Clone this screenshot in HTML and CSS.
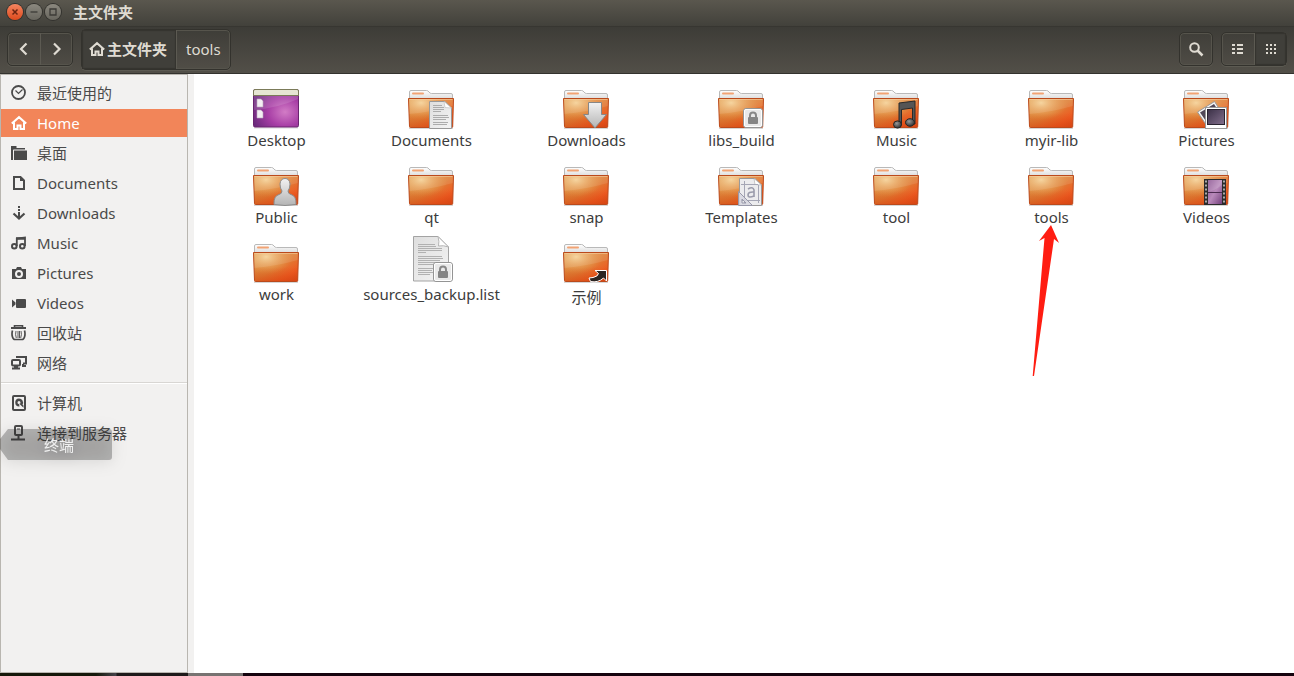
FILE: index.html
```html
<!DOCTYPE html>
<html lang="zh-CN">
<head>
<meta charset="utf-8">
<title>主文件夹</title>
<link rel="stylesheet" href="styles.css">
</head>
<body>
<svg class="defs" aria-hidden="true">
  <defs>
    <linearGradient id="gFolder" x1="0" y1="0" x2="1" y2="1">
      <stop offset="0" stop-color="#de9a4c"/><stop offset=".5" stop-color="#df7e36"/><stop offset=".78" stop-color="#ee5a22"/><stop offset="1" stop-color="#dc481a"/>
    </linearGradient>
    <radialGradient id="gGlow" cx=".28" cy=".15" r=".6">
      <stop offset="0" stop-color="#f6d49a" stop-opacity=".95"/><stop offset="1" stop-color="#e8a050" stop-opacity="0"/>
    </radialGradient>
    <linearGradient id="gShade" x1="0" y1="0" x2="0" y2="1">
      <stop offset=".5" stop-color="#d0480c" stop-opacity="0"/><stop offset="1" stop-color="#d0400c" stop-opacity=".5"/>
    </linearGradient>
    <linearGradient id="gTab" x1="0" y1="0" x2="0" y2="1">
      <stop offset="0" stop-color="#fff"/><stop offset="1" stop-color="#dcdcdc"/>
    </linearGradient>
    <linearGradient id="gPaper" x1="0" y1="0" x2="1" y2="1">
      <stop offset="0" stop-color="#dedede"/><stop offset="1" stop-color="#f4f4f4"/>
    </linearGradient>
    <linearGradient id="gMetal" x1="0" y1="0" x2="0" y2="1">
      <stop offset="0" stop-color="#f2f2f2"/><stop offset="1" stop-color="#b4b4b4"/>
    </linearGradient>
    <radialGradient id="gPurple" cx=".7" cy=".6" r=".75">
      <stop offset="0" stop-color="#d27cc6"/><stop offset=".5" stop-color="#a83fa6"/><stop offset="1" stop-color="#6b2a7c"/>
    </radialGradient>
    <linearGradient id="gPhoto" x1="0" y1="0" x2="1" y2="1">
      <stop offset="0" stop-color="#3a3046"/><stop offset="1" stop-color="#84708e"/>
    </linearGradient>
    <linearGradient id="gFilm" x1="0" y1="0" x2="1" y2="1">
      <stop offset="0" stop-color="#8a5290"/><stop offset=".5" stop-color="#b98abb"/><stop offset="1" stop-color="#74407c"/>
    </linearGradient>
    <radialGradient id="gNote" cx=".4" cy=".35" r=".6">
      <stop offset="0" stop-color="#999"/><stop offset="1" stop-color="#3a3a3a"/>
    </radialGradient>
  </defs>
  <symbol id="folder" viewBox="0 0 48 48">
    <path d="M2 47.600H46" stroke="#000" stroke-opacity=".16" stroke-width="1.600"/>
    <path d="M2.500 18V11q0-1.500 1.500-1.500H19.500q1.500 0 2.500 1.500t2.500 1.500H44q1.500 0 1.500 1.500v4z" fill="url(#gTab)" stroke="#b9b9b9"/>
    <rect x="5" y="11.500" width="12" height="2" rx="1" fill="#f2a374"/>
    <path d="M1.500 17.500h45L45.700 45.500q0 1-1 1H3.500q-1 0-1-1z" fill="url(#gFolder)"/>
    <path d="M1.500 17.500h45L45.700 45.500q0 1-1 1H3.500q-1 0-1-1z" fill="url(#gGlow)"/>
    <path d="M1.500 17.500h45L45.700 45.500q0 1-1 1H3.500q-1 0-1-1z" fill="url(#gShade)" stroke="#bb4a1c"/>
    <path d="M2 18h44l-.2 7Q25 31 2.400 33z" fill="#fff" fill-opacity=".1"/>
    <path d="M2.500 18.500h43" stroke="#f5cfa0" stroke-opacity=".6"/>
  </symbol>
  <symbol id="lock" viewBox="0 0 48 48">
    <rect x="26.500" y="27.500" width="19" height="19" rx="2.500" fill="#e9e9e9" stroke="#949494"/>
    <rect x="27.500" y="28.500" width="17" height="17" rx="1.500" fill="none" stroke="#fff"/>
    <path d="M33 37v-2.500a3 3 0 0 1 6 0V37" fill="none" stroke="#888" stroke-width="2"/>
    <rect x="31" y="36" width="10" height="7" rx="1" fill="#858585"/>
  </symbol>
  <symbol id="i-home" viewBox="0 0 16 16">
    <path d="M.8 8.600 8 2.200l7.200 6.400M3 7.500V14h3.500v-3.500h3V14H13V7.500" fill="none" stroke="currentColor" stroke-width="2"/>
  </symbol>
</svg>

<div class="window">
  <header class="chrome">
    <div class="titlebar">
      <button class="wbtn wbtn-close" aria-label="关闭"><svg viewBox="0 0 16 16"><path d="M5.500 5.500l5 5m0-5l-5 5" stroke="#6b2411" stroke-width="1.500"/></svg></button>
      <button class="wbtn" aria-label="最小化"><svg viewBox="0 0 16 16"><path d="M4.500 8h7" stroke="#3c3b37" stroke-width="1.300"/></svg></button>
      <button class="wbtn" aria-label="最大化"><svg viewBox="0 0 16 16"><path d="M5 5h6v6H5z" fill="none" stroke="#3c3b37" stroke-width="1.300"/></svg></button>
      <h1 class="title">主文件夹</h1>
    </div>
    <div class="toolbar">
      <div class="group nav">
        <button class="tbtn" aria-label="后退"><svg class="ico" viewBox="0 0 16 16"><path d="M10.500 2.500 5 8l5.500 5.500" fill="none" stroke="currentColor" stroke-width="2.200"/></svg></button>
        <button class="tbtn" aria-label="前进"><svg class="ico" viewBox="0 0 16 16"><path d="m5 2.500 5.500 5.500L5 13.500" fill="none" stroke="currentColor" stroke-width="2.200"/></svg></button>
      </div>
      <nav class="group path">
        <button class="crumb active"><svg class="ico"><use href="#i-home"/></svg>主文件夹</button>
        <button class="crumb">tools</button>
      </nav>
      <div class="group find">
        <button class="tbtn" aria-label="搜索"><svg class="ico" viewBox="0 0 16 16"><circle cx="6.500" cy="6.500" r="4.300" fill="none" stroke="currentColor" stroke-width="2"/><path d="m9.500 9.500 5 5" stroke="currentColor" stroke-width="2.500"/></svg></button>
      </div>
      <div class="group">
        <button class="tbtn" aria-label="列表视图"><svg class="ico" viewBox="0 0 16 16" fill="currentColor"><path d="M2 3h3v2H2zM7 3h6v2H7zM2 7h3v2H2zM7 7h6v2H7zM2 11h3v2H2zM7 11h6v2H7z"/></svg></button>
        <button class="tbtn active" aria-label="图标视图"><svg class="ico" viewBox="0 0 16 16" fill="currentColor"><path d="M3 3h2v2H3zM7 3h2v2H7zM11 3h2v2h-2zM3 7h2v2H3zM7 7h2v2H7zM11 7h2v2h-2zM3 11h2v2H3zM7 11h2v2H7zM11 11h2v2h-2z"/></svg></button>
      </div>
    </div>
  </header>

  <div class="body">
    <aside class="sidebar">
      <ul class="places">
        <li><a class="place" href="#recent"><svg class="ico" viewBox="0 0 16 16" fill="none" stroke="currentColor"><circle cx="7.500" cy="7.500" r="6.500" stroke-width="1.800"/><path d="M4.500 5.500 7.500 8.500l4-4" stroke-width="1.200"/></svg>最近使用的</a></li>
        <li><a class="place selected" href="#home"><svg class="ico"><use href="#i-home"/></svg>Home</a></li>
        <li><a class="place" href="#desktop"><svg class="ico" viewBox="0 0 16 16" fill="currentColor"><path d="M0 1h5.500v2H14v1.500H2.500L2 5v10H0zM3 5.500h13V15H3z"/></svg>桌面</a></li>
        <li><a class="place" href="#documents"><svg class="ico" viewBox="0 0 16 16"><path d="M3 2h6.500L13 5.500V14H3z" fill="none" stroke="currentColor" stroke-width="2"/><path d="M9 1.500V6h4.500z" fill="currentColor"/></svg>Documents</a></li>
        <li><a class="place" href="#downloads"><svg class="ico" viewBox="0 0 16 16"><path d="M7 1h2v2H7zM7 4h2v2H7zM7 7h2v6H7z" fill="currentColor"/><path d="M2.500 8.500 8 13.500l5.500-5" fill="none" stroke="currentColor" stroke-width="2.200"/></svg>Downloads</a></li>
        <li><a class="place" href="#music"><svg class="ico" viewBox="0 0 16 16" fill="none" stroke="currentColor" stroke-width="2"><circle cx="3.300" cy="11.300" r="2.300"/><circle cx="11.300" cy="11.300" r="2.300"/><path d="M5.800 11V3.500L14 2.500V11" stroke-width="1.800"/><path d="M5 3.500h9" stroke-width="2.500"/></svg>Music</a></li>
        <li><a class="place" href="#pictures"><svg class="ico" viewBox="0 0 16 16"><path fill="currentColor" fill-rule="evenodd" d="M1 4h4l1-2h4l1 2h4v10H1zM8 5a4 4 0 1 0 0 8 4 4 0 0 0 0-8zm0 2a2 2 0 1 1 0 4 2 2 0 0 1 0-4z"/></svg>Pictures</a></li>
        <li><a class="place" href="#videos"><svg class="ico" viewBox="0 0 16 16" fill="currentColor"><rect x="5" y="4" width="10" height="9" rx="1"/><path d="M1 4.500 4.500 7.500v2L1 12.500z"/></svg>Videos</a></li>
        <li><a class="place" href="#trash"><svg class="ico" viewBox="0 0 16 16" fill="none" stroke="currentColor"><path d="M0 3h15" stroke-width="2"/><path d="M3.500 2V.8h8V2" stroke-width="1.600"/><path d="M1.500 5.500Q.5 9 1.500 12q.7 2.500 2.500 2.500h7q1.800 0 2.500-2.500 1-3 0-6.500" stroke-width="1.700"/><path d="M5 6q-1 3.500.3 7M10 6q1 3.500-.3 7M7 6v7M8.500 6v7" stroke-width=".9"/></svg>回收站</a></li>
        <li><a class="place" href="#network"><svg class="ico" viewBox="0 0 16 16" fill="none" stroke="currentColor" stroke-width="2"><rect x="1" y="5" width="8" height="5.500" rx="1"/><path d="M6 3V2h9v6.500h-3"/><path d="M1 13.500h8M3 12h4" stroke-width="2.200"/><path d="M11 11h4M12 9v2"/></svg>网络</a></li>
      </ul>
      <ul class="places devices">
        <li><a class="place" href="#computer"><svg class="ico" viewBox="0 0 16 16"><rect x="2" y="1" width="12" height="14" rx="1" fill="none" stroke="currentColor" stroke-width="2"/><path fill="currentColor" fill-rule="evenodd" d="M8 3.500a4 4 0 1 0 .5 8L8 8.500l4.500 4.200 0-2.200-1-1A4 4 0 0 0 8 3.500zM8 6a1.500 1.500 0 1 1 0 3 1.500 1.500 0 0 1 0-3z"/></svg>计算机</a></li>
        <li><a class="place" href="#connect"><svg class="ico" viewBox="0 0 16 16"><rect x="4" y="1" width="7" height="9" rx="1" fill="none" stroke="currentColor" stroke-width="2"/><path fill="currentColor" d="M6 3.500h3v1H6zM6.500 10h2v4h-2zM0 13.500h14v2H0z"/></svg>连接到服务器</a></li>
      </ul>
    </aside>

    <main class="files">
      <ul class="grid">
        <li class="file"><svg class="thumb" viewBox="0 0 48 48"><path d="M2 47h44" stroke="#000" stroke-opacity=".15"/><rect x="1.500" y="8.500" width="45" height="37.500" rx="1.500" fill="url(#gPurple)" stroke="#6a246f"/><path d="M2 15h44v3Q26 27 2 29z" fill="#fff" fill-opacity=".13"/><path d="M1.500 14.500V10q0-1.500 1.500-1.500h42q1.500 0 1.500 1.500v4.500z" fill="#e6e6d3" stroke="#7b7b59"/><path d="M5 18h4l2 2v6H5zM5 29h4l2 2v6H5z" fill="#f3eef3" stroke="#b9a6bd" stroke-width=".6"/></svg><span class="label">Desktop</span></li>
        <li class="file"><svg class="thumb" viewBox="0 0 48 48"><use href="#folder"/><path d="M22.500 20.500H38L44.500 27v20.500h-22z" fill="url(#gPaper)" stroke="#999"/><path d="M37 20.500 38 26.500l6.500.5z" fill="#fff" stroke="#bbb" stroke-width=".6"/><path d="M26 24.500h9M26 26.500h11M26 28.500h11M26 30.500h8M26 34.500h15M26 36.500h16M26 38.500h13M26 41.500h15M26 43.500h14" stroke="#a5a5a5" stroke-width=".9"/></svg><span class="label">Documents</span></li>
        <li class="file"><svg class="thumb" viewBox="0 0 48 48"><use href="#folder"/><path d="M26.500 21.500h13v12h5L33 47 21.500 33.500h5z" fill="url(#gMetal)" stroke="#878787"/></svg><span class="label">Downloads</span></li>
        <li class="file"><svg class="thumb" viewBox="0 0 48 48"><use href="#folder"/><use href="#lock"/></svg><span class="label">libs_build</span></li>
        <li class="file"><svg class="thumb" viewBox="0 0 48 48"><use href="#folder"/><path d="M27 22 43 20v23h-2.500V27l-11 1.500V44H27z" fill="#555" stroke="#292929"/><ellipse cx="25.500" cy="43.500" rx="4" ry="3.600" fill="url(#gNote)" stroke="#262626"/><ellipse cx="38" cy="41.500" rx="4.500" ry="3.800" fill="url(#gNote)" stroke="#262626"/></svg><span class="label">Music</span></li>
        <li class="file"><svg class="thumb" viewBox="0 0 48 48"><use href="#folder"/></svg><span class="label">myir-lib</span></li>
        <li class="file"><svg class="thumb" viewBox="0 0 48 48"><use href="#folder"/><path d="m15.500 31 17-10.500 9 14L25 45z" fill="#f5f5f5" stroke="#999"/><path d="m18 31.500 14-8.500 7 11L26 43z" fill="#514858"/><rect x="23.500" y="26.500" width="21" height="21" fill="#fff" stroke="#999"/><rect x="25.500" y="28.500" width="17" height="15" fill="url(#gPhoto)" stroke="#292330"/></svg><span class="label">Pictures</span></li>
        <li class="file"><svg class="thumb" viewBox="0 0 48 48"><use href="#folder"/><path d="M22 46.500q-.5-8.500 5-10 3-.8 3-3.500-2-2.500-2-7 .5-5.500 5-5.500t5 5.500q0 4.500-2 7 0 2.700 3 3.500 5.500 1.500 5 10-11 2-22 0z" fill="url(#gMetal)" stroke="#8c8c8c"/></svg><span class="label">Public</span></li>
        <li class="file"><svg class="thumb" viewBox="0 0 48 48"><use href="#folder"/></svg><span class="label">qt</span></li>
        <li class="file"><svg class="thumb" viewBox="0 0 48 48"><use href="#folder"/></svg><span class="label">snap</span></li>
        <li class="file"><svg class="thumb" viewBox="0 0 48 48"><use href="#folder"/><path d="M22.500 20.500H38L44.500 27v20.500h-22z" fill="#ececee" stroke="#999"/><path d="M37 20.500 38 26.500l6.500.5z" fill="#fff" stroke="#aaa" stroke-width=".6"/><path d="M27.500 23v22M41.500 27v18M24 26.500h17M24 42.500h19" stroke="#a5a6b5"/><path d="M31 31q5-3 6 1v7M37 34q-6-.5-6 3t6 1" fill="none" stroke="#9a9bab" stroke-width="1.600"/><path d="M21.500 33.500v14h14zM25 41v4h4z" fill="#d7d7df" fill-opacity=".85" fill-rule="evenodd" stroke="#9899aa"/></svg><span class="label">Templates</span></li>
        <li class="file"><svg class="thumb" viewBox="0 0 48 48"><use href="#folder"/></svg><span class="label">tool</span></li>
        <li class="file"><svg class="thumb" viewBox="0 0 48 48"><use href="#folder"/></svg><span class="label">tools</span>
          <svg class="pointer" viewBox="0 0 28 152" aria-hidden="true"><path d="M19 0 27 18 22 14 2 151H.7L12.500 13 7 16z" fill="#ff1d12"/></svg></li>
        <li class="file"><svg class="thumb" viewBox="0 0 48 48"><use href="#folder"/><rect x="22" y="21" width="22" height="26" fill="#2b2b2b"/><rect x="26" y="22" width="14" height="24" fill="url(#gFilm)"/><path d="M26 22h14v5q-8 6-14 7z" fill="#fff" fill-opacity=".15"/><path d="M26 34.500h14" stroke="#4c2b50"/><path d="M24 22.500v24M42 22.500v24" stroke="#aaa" stroke-width="2" stroke-dasharray="2 2"/></svg><span class="label">Videos</span></li>
        <li class="file"><svg class="thumb" viewBox="0 0 48 48"><use href="#folder"/></svg><span class="label">work</span></li>
        <li class="file"><svg class="thumb" viewBox="0 0 48 48"><path d="M6.500 1.500H31L41.500 12v34h-35z" fill="url(#gPaper)" stroke="#a3a3a3"/><path d="M31 1.500q1.500 5 .5 9.500 5-1 10 1z" fill="#fff" stroke="#b5b5b5"/><path d="M11 9.500h17M11 11.500h18M11 13.500h24M11 15.500h24M11 17.500h8M11 21.500h24M11 23.500h25M11 25.500h22M11 27.500h24M11 29.500h21M11 33.500h15M11 35.500h14M11 37.500h15M11 39.500h12" stroke="#aaa" stroke-width=".9"/><use href="#lock"/></svg><span class="label">sources_backup.list</span></li>
        <li class="file"><svg class="thumb" viewBox="0 0 48 48"><use href="#folder"/><path d="M33 35.500h11.500V46L41.500 43q-5.500 5-13 3.500l-1.500-3.500 4-.5q5-1 5.500-4z" fill="#2c2522" stroke="#fff"/></svg><span class="label label-tall">示例</span></li>
      </ul>
    </main>
  </div>
  <div class="backdrop"></div>
</div>

<div class="tooltip" role="tooltip">终端</div>
</body>
</html>
```
FILE: styles.css
```css
* { box-sizing: border-box; }

body {
  margin: 0;
  font: 15px/20px "Noto Sans", "Noto Sans CJK SC", sans-serif;
  color: #3c3c3c;
  background: #fff;
}

ul { list-style: none; margin: 0; padding: 0; }

button {
  font: inherit;
  color: inherit;
  border: 0;
  margin: 0;
  padding: 0;
  background: none;
}

.defs { position: absolute; width: 0; height: 0; }

.ico { display: block; flex: none; width: 16px; height: 16px; }

.window { display: flex; flex-direction: column; min-height: 100vh; }

/* Title bar and toolbar */
.chrome { color: #dfdbd2; border-bottom: 1px solid #33322e; }

.titlebar {
  display: flex;
  align-items: center;
  gap: 3px;
  height: 26px;
  padding: 0 7px 3px;
  background: linear-gradient(#5a574e, #42413b);
}

.wbtn {
  width: 16px;
  height: 16px;
  border-radius: 50%;
  background: linear-gradient(#8b887f, #68665e);
  box-shadow: 0 0 0 1px #33322e;
}

.wbtn-close { background: linear-gradient(#f58560, #dd4a1d); }

.wbtn svg { display: block; }

.title { margin: 0 0 0 9px; font-size: 15px; line-height: 20px; font-weight: 700; }

.toolbar {
  display: flex;
  align-items: center;
  gap: 8px;
  height: 47px;
  padding: 0 7px 2px;
  border-top: 1px solid #373631;
  background: linear-gradient(#3d3c37, #524f48);
}

.group {
  display: flex;
  border: 1px solid #33322d;
  border-radius: 5px;
  box-shadow: inset 0 0 0 1px #56544c, 0 1px #5c5a52;
}

.tbtn { display: grid; place-items: center; width: 32px; height: 32px; }

.tbtn + .tbtn, .crumb + .crumb { border-left: 1px solid #5c5a52; }

.active { background: #403f3a; box-shadow: inset 0 0 1px 1px #35342f; }

.crumb {
  display: flex;
  align-items: center;
  gap: 2px;
  height: 39px;
  padding: 0 9px;
}

.crumb.active { font-weight: 700; padding: 0 9px 0 7px; }

.find { margin-left: auto; }

/* Content */
.body { display: flex; flex: 1; background: #f2f1f0; }

.sidebar {
  flex: none;
  width: 188px;
  padding-top: 4px;
  border: 1px solid #b9b6b0;
  color: #4a4a4a;
}

.places { display: flex; flex-direction: column; gap: 2px; }

.devices {
  margin-top: 5px;
  padding-top: 6px;
  border-top: 1px solid #d8d6d3;
  box-shadow: inset 0 1px #fff;
}

.place {
  display: flex;
  align-items: center;
  gap: 10px;
  height: 28px;
  padding-left: 10px;
  color: inherit;
  text-decoration: none;
}

.place.selected { color: #fff; background: #f28559; }

.files {
  flex: 1;
  margin-left: 6px;
  padding: 7px 10px 7px 5px;
  background: #fff;
}

.grid {
  display: grid;
  grid-template-columns: repeat(7, 1fr);
  row-gap: 7px;
}

.file {
  position: relative;
  display: flex;
  flex-direction: column;
  align-items: center;
}

.thumb { display: block; width: 48px; height: 48px; margin-right: 1px; }

.label { line-height: 22px; }

.label-tall { line-height: 28px; }

.pointer {
  position: absolute;
  top: 67px;
  left: 50%;
  width: 28px;
  height: 152px;
  margin-left: -20px;
}

/* Desktop showing below the window */
.backdrop {
  height: 3px;
  background: linear-gradient(90deg, #15180a 0 96px, #45434a 116px, #1e1a1a 117px 188px, #777371 188px 243px, #15030e 243px);
}

/* Launcher label fading over the sidebar */
.tooltip {
  position: absolute;
  left: 0;
  top: 429px;
  width: 112px;
  padding: 6px 0 5px 44px;
  border-radius: 0 3px 3px 0;
  color: #f0f0f0;
  filter: drop-shadow(0 2px 8px rgb(0 0 0 / 35%));
}

.tooltip::before {
  content: "";
  position: absolute;
  inset: 0;
  z-index: -1;
  border-radius: inherit;
  background: rgb(40 40 40 / 30%);
  clip-path: polygon(8px 0, 100% 0, 100% 100%, 8px 100%, 0 20px, 0 10px);
}
```
